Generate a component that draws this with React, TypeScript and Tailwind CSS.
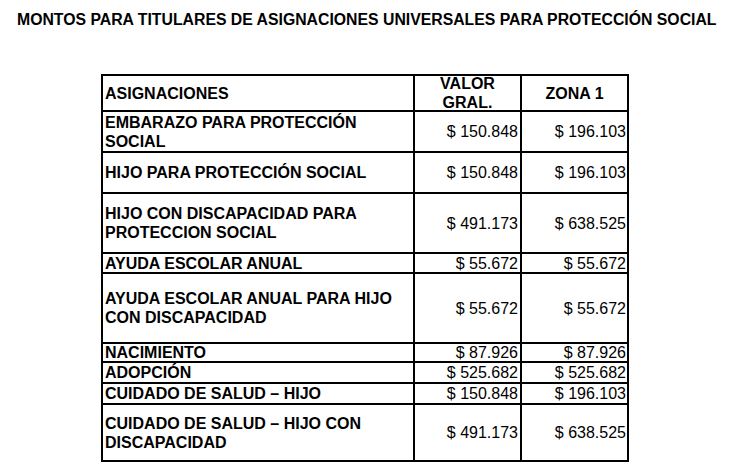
const rows: { label: string[]; valor: string; zona: string; h: string }[] = [
  { label: ["EMBARAZO PARA PROTECCIÓN", "SOCIAL"], valor: "$ 150.848", zona: "$ 196.103", h: "h-[41px]" },
  { label: ["HIJO PARA PROTECCIÓN SOCIAL"], valor: "$ 150.848", zona: "$ 196.103", h: "h-[41px]" },
  { label: ["HIJO CON DISCAPACIDAD PARA", "PROTECCION SOCIAL"], valor: "$ 491.173", zona: "$ 638.525", h: "h-[60px]" },
  { label: ["AYUDA ESCOLAR ANUAL"], valor: "$ 55.672", zona: "$ 55.672", h: "h-[20px]" },
  { label: ["AYUDA ESCOLAR ANUAL PARA HIJO", "CON DISCAPACIDAD"], valor: "$ 55.672", zona: "$ 55.672", h: "h-[70px]" },
  { label: ["NACIMIENTO"], valor: "$ 87.926", zona: "$ 87.926", h: "h-[19px]" },
  { label: ["ADOPCIÓN"], valor: "$ 525.682", zona: "$ 525.682", h: "h-[21px]" },
  { label: ["CUIDADO DE SALUD – HIJO"], valor: "$ 150.848", zona: "$ 196.103", h: "h-[21px]" },
  { label: ["CUIDADO DE SALUD – HIJO CON", "DISCAPACIDAD"], valor: "$ 491.173", zona: "$ 638.525", h: "h-[57px]" },
];

export default function App() {
  return (
    <div className="w-[730px] h-[465px] bg-white text-black font-['Liberation_Sans',Arial,sans-serif] overflow-hidden">
      <h1 className="pt-[11px] pl-[17px] text-[15.8px] leading-[18px] font-bold">
        MONTOS PARA TITULARES DE ASIGNACIONES UNIVERSALES PARA PROTECCIÓN SOCIAL
      </h1>

      <table className="mt-[45px] ml-[101px] border-collapse border-2 border-black text-[16px] leading-[17px]">
        <colgroup>
          <col className="w-[312px]" />
          <col className="w-[107px]" />
          <col className="w-[107px]" />
        </colgroup>
        <thead>
          <tr className="h-[36px]">
            <th className="border-2 border-black px-[2px] py-0 text-left align-middle font-bold">
              ASIGNACIONES
            </th>
            <th className="border-2 border-black px-[2px] py-0 text-center align-top font-bold">
              {/* the second line runs into the border, as in the source sheet */}
              <div className="relative -top-[2px] h-[32px] leading-[19px]">
                VALOR
                <br />
                GRAL.
              </div>
            </th>
            <th className="border-2 border-black px-[2px] py-0 text-center align-middle font-bold">
              ZONA 1
            </th>
          </tr>
        </thead>
        <tbody>
          {rows.map((row) => (
            <tr key={row.label.join(" ")} className={row.h}>
              <td
                className={
                  row.label.length > 1
                    ? "border-2 border-black px-[2px] py-0 align-middle font-bold leading-[19px]"
                    : "border-2 border-black px-[2px] py-0 align-middle font-bold"
                }
              >
                {row.label.map((line, i) => (
                  <span key={line}>
                    {i > 0 && <br />}
                    {line}
                  </span>
                ))}
              </td>
              <td className="border-2 border-black pl-[2px] pr-[2px] py-0 text-right align-middle">
                {row.valor}
              </td>
              <td className="border-2 border-black pl-[2px] pr-[1px] py-0 text-right align-middle">
                {row.zona}
              </td>
            </tr>
          ))}
        </tbody>
      </table>
    </div>
  );
}
